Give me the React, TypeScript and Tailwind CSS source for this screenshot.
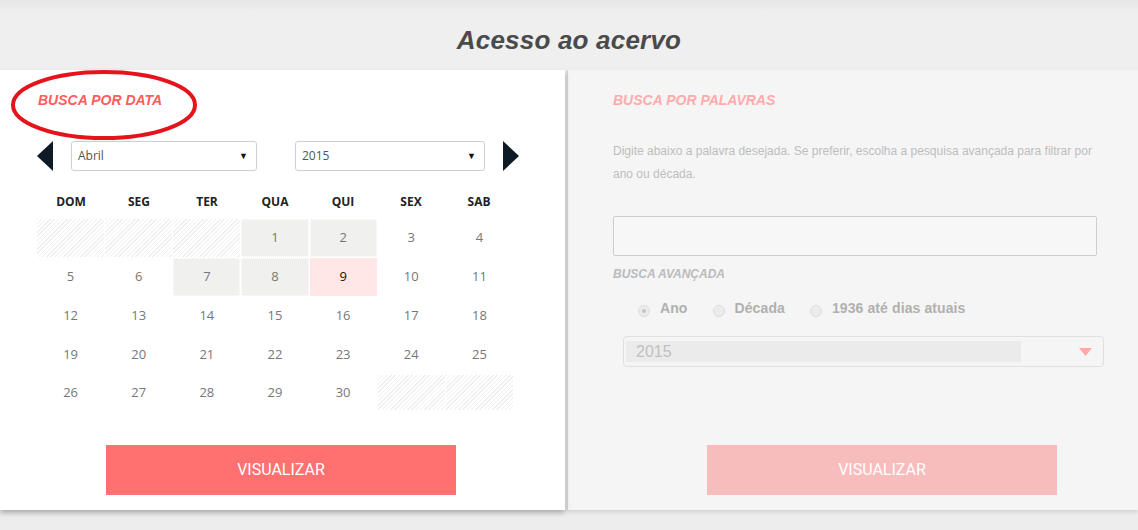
import React from 'react';

const weeks: (number | null)[][] = [
  [null, null, null, 1, 2, 3, 4],
  [5, 6, 7, 8, 9, 10, 11],
  [12, 13, 14, 15, 16, 17, 18],
  [19, 20, 21, 22, 23, 24, 25],
  [26, 27, 28, 29, 30, null, null],
];

const weekdays = ['DOM', 'SEG', 'TER', 'QUA', 'QUI', 'SEX', 'SAB'];

function Arrow({ dir }: { dir: 'left' | 'right' }) {
  return (
    <svg width="16" height="30" viewBox="0 0 16 30">
      {dir === 'left' ? (
        <polygon points="16,0 0,15 16,30" fill="#0e1a26" />
      ) : (
        <polygon points="0,0 16,15 0,30" fill="#0e1a26" />
      )}
    </svg>
  );
}

function FakeSelect({ value, width }: { value: string; width: string }) {
  return (
    <div
      className={`${width} h-[30px] flex items-center justify-between border border-[#cfcfcf] rounded-[3px] bg-white pl-[6px] pr-[8px] font-['Open_Sans',sans-serif] text-[12px] text-[#555]`}
    >
      <span>{value}</span>
      <span className="text-[9px] text-[#111]">▼</span>
    </div>
  );
}

function DayCell({ day, short }: { day: number | null; short?: boolean }) {
  const h = short ? 'h-[35px]' : 'h-[38px]';
  if (day === null) {
    return (
      <div className={`${h} bg-[repeating-linear-gradient(135deg,#efefef_0px,#efefef_1px,transparent_1px,transparent_3px)]`} />
    );
  }
  let cls = 'text-[#777]';
  if (day === 1 || day === 2 || day === 7 || day === 8) {
    cls = 'bg-[#f0f0ee] border border-dotted border-white text-[#777]';
  } else if (day === 9) {
    cls = 'bg-[#ffe7e7] text-[#111]';
  }
  return (
    <div className={`${h} flex items-center justify-center text-[13px] ${cls}`}>{day}</div>
  );
}

function Radio({ label, checked }: { label: string; checked?: boolean }) {
  return (
    <div className="flex items-start gap-[10px]">
      <span className="mt-[5px] w-[12px] h-[12px] rounded-full border border-[#dcdcdc] bg-[#ececec] flex items-center justify-center">
        {checked && <span className="w-[4px] h-[4px] rounded-full bg-[#c4c4c4]" />}
      </span>
      <span className="font-bold text-[14px] leading-[16px] text-[#b0b0b0] tracking-[0.1px]">{label}</span>
    </div>
  );
}

export default function App() {
  return (
    <div className="w-[1138px] h-[530px] bg-[#ededed] overflow-hidden font-['Liberation_Sans',Arial,sans-serif]">
      <div className="h-[70px] flex items-center justify-center bg-[linear-gradient(#e6e6e6,#efefef_12px,#efefef)]">
        <h1 className="text-[26px] font-bold italic text-[#4a4a4a] pt-[10px] tracking-[0.2px]">Acesso ao acervo</h1>
      </div>

      <div className="flex h-[440px]">
        {/* left: busca por data */}
        <div className="relative w-[565px] bg-white shadow-[0_3px_5px_rgba(0,0,0,0.28)] pl-[37px] pt-[22px]">
          <h2 className="pl-[1px] text-[14px] font-bold italic text-[#ff5c5c] leading-[16px]">BUSCA POR DATA</h2>
          <svg className="absolute left-[10px] top-[0px]" width="190" height="72" viewBox="0 0 190 72">
            <ellipse cx="94" cy="35" rx="91" ry="33" fill="none" stroke="#e5141c" strokeWidth="4" />
          </svg>

          <div className="mt-[33px] flex items-center">
            <Arrow dir="left" />
            <div className="ml-[18px]">
              <FakeSelect value="Abril" width="w-[186px]" />
            </div>
            <div className="ml-[38px]">
              <FakeSelect value="2015" width="w-[190px]" />
            </div>
            <div className="ml-[18px]">
              <Arrow dir="right" />
            </div>
          </div>

          <div className="mt-[13px] w-[476px] font-['Open_Sans',sans-serif]">
            <div className="grid grid-cols-7 h-[35px] items-center">
              {weekdays.map(w => (
                <div key={w} className="text-center text-[12px] font-bold text-[#222]">{w}</div>
              ))}
            </div>
            <div className="flex flex-col gap-[1px]">
              {weeks.map((week, i) => (
                <div key={i} className="grid grid-cols-7 gap-x-[1px]">
                  {week.map((d, j) => (
                    <DayCell key={j} day={d} short={i === 4} />
                  ))}
                </div>
              ))}
            </div>
          </div>

          <button className="mt-[35px] ml-[69px] w-[350px] h-[50px] bg-[#ff7070] text-white text-[16px] font-['Roboto',sans-serif]">
            VISUALIZAR
          </button>
        </div>

        {/* right: busca por palavras */}
        <div className="ml-[2px] flex-1 bg-[#f5f5f5] border-l border-[#d4d4d4] shadow-[0_2px_4px_rgba(0,0,0,0.12)] pl-[45px] pt-[22px]">
          <h2 className="text-[14px] font-bold italic text-[#ffabab] leading-[16px]">BUSCA POR PALAVRAS</h2>
          <p className="mt-[32px] w-[500px] text-[12px] leading-[23px] text-[#bdbdbd]">
            Digite abaixo a palavra desejada. Se preferir, escolha a pesquisa avançada para filtrar por ano ou década.
          </p>
          <div className="mt-[30px] w-[484px] h-[40px] border border-[#cdcdcd] rounded-[2px] bg-[#f7f7f7]" />
          <h3 className="mt-[11px] text-[12px] font-bold italic text-[#bbbbbb] leading-[14px]">BUSCA AVANÇADA</h3>
          <div className="mt-[19px] ml-[25px] flex gap-[25px]">
            <Radio label="Ano" checked />
            <Radio label="Década" />
            <Radio label="1936 até dias atuais" />
          </div>
          <div className="mt-[19px] ml-[10px] w-[481px] h-[31px] border border-[#e0e0e0] rounded-[4px] flex items-center pl-[2px] pr-[11px]">
            <div className="w-[395px] h-[21px] bg-[#ebebeb] flex items-center pl-[10px] text-[16px] text-[#c0c0c0] font-['Liberation_Sans',sans-serif]">
              2015
            </div>
            <div className="flex-1" />
            <svg width="13" height="8" viewBox="0 0 13 8">
              <polygon points="0,0 13,0 6.5,8" fill="#ffaaaa" />
            </svg>
          </div>
          <button className="mt-[78px] ml-[94px] w-[350px] h-[50px] bg-[#f7bcbc] text-white text-[16px] font-['Roboto',sans-serif]">
            VISUALIZAR
          </button>
        </div>
      </div>
    </div>
  );
}
